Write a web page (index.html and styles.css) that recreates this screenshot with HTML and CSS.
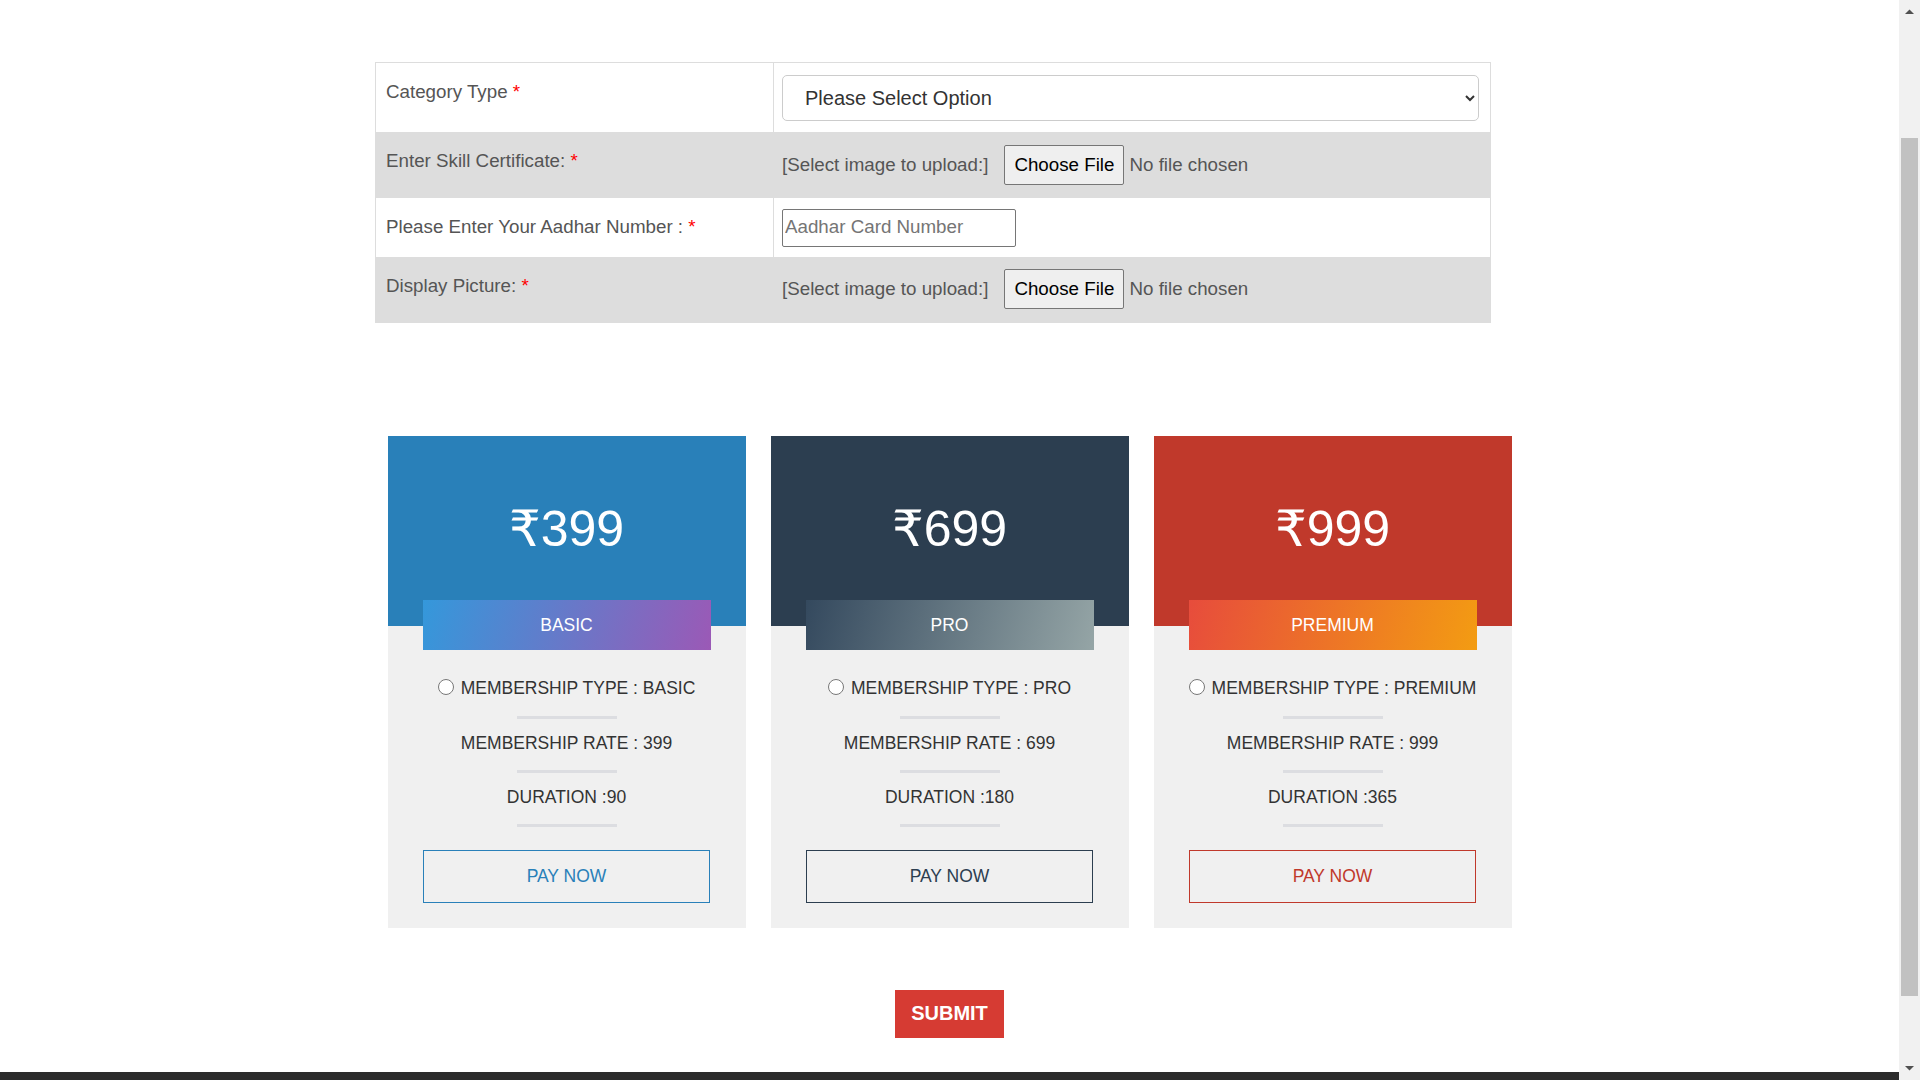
FILE: index.html
```html
<!DOCTYPE html>
<html lang="en">
<head>
<meta charset="utf-8">
<title>Membership</title>
<link rel="stylesheet" href="styles.css">
</head>
<body>
<main class="page">
<div class="form-wrap">
  <table class="form-table">
    <colgroup><col class="col-lbl"><col></colgroup>
    <tr class="r1 white">
      <td class="lbl">Category Type <span class="req">*</span></td>
      <td class="fld"><select class="sel"><option>Please Select Option</option></select></td>
    </tr>
    <tr class="r2 gray">
      <td class="lbl">Enter Skill Certificate: <span class="req">*</span></td>
      <td class="fld"><div class="fld-inner"><span class="hint">[Select image to upload:]</span><input type="file" class="file"></div></td>
    </tr>
    <tr class="r3 white">
      <td class="lbl">Please Enter Your Aadhar Number : <span class="req">*</span></td>
      <td class="fld"><input type="text" class="txt" placeholder="Aadhar Card Number"></td>
    </tr>
    <tr class="r4 gray">
      <td class="lbl">Display Picture: <span class="req">*</span></td>
      <td class="fld"><div class="fld-inner"><span class="hint">[Select image to upload:]</span><input type="file" class="file"></div></td>
    </tr>
  </table>
</div>

<div class="plans">
  <div class="card basic">
    <div class="card-head">₹399</div>
    <div class="ribbon">BASIC</div>
    <ul class="feat">
      <li><label class="radio-lbl"><input type="radio" name="plan" class="radio">MEMBERSHIP TYPE : BASIC</label></li>
      <li class="sep"></li>
      <li>MEMBERSHIP RATE : 399</li>
      <li class="sep"></li>
      <li>DURATION :90</li>
      <li class="sep"></li>
    </ul>
    <button class="pay">PAY NOW</button>
  </div>
  <div class="card pro">
    <div class="card-head">₹699</div>
    <div class="ribbon">PRO</div>
    <ul class="feat">
      <li><label class="radio-lbl"><input type="radio" name="plan" class="radio">MEMBERSHIP TYPE : PRO</label></li>
      <li class="sep"></li>
      <li>MEMBERSHIP RATE : 699</li>
      <li class="sep"></li>
      <li>DURATION :180</li>
      <li class="sep"></li>
    </ul>
    <button class="pay">PAY NOW</button>
  </div>
  <div class="card premium">
    <div class="card-head">₹999</div>
    <div class="ribbon">PREMIUM</div>
    <ul class="feat">
      <li><label class="radio-lbl"><input type="radio" name="plan" class="radio">MEMBERSHIP TYPE : PREMIUM</label></li>
      <li class="sep"></li>
      <li>MEMBERSHIP RATE : 999</li>
      <li class="sep"></li>
      <li>DURATION :365</li>
      <li class="sep"></li>
    </ul>
    <button class="pay">PAY NOW</button>
  </div>
</div>

<div class="submit-row"><button class="submit">SUBMIT</button></div>

<footer class="footer"></footer>
</main>

<div class="vscroll" aria-hidden="true">
  <div class="sb-btn"><svg width="21" height="21" viewBox="0 0 21 21"><polygon points="6,14 15,14 10.5,9.5" fill="#505050"/></svg></div>
  <div class="sb-track"><div class="sb-thumb"></div></div>
  <div class="sb-btn"><svg width="21" height="21" viewBox="0 0 21 21"><polygon points="6,7 15,7 10.5,11.5" fill="#505050"/></svg></div>
</div>
</body>
</html>
```

FILE: styles.css
```css
html, body { margin: 0; padding: 0; }
body {
  font-family: "Liberation Sans", Arial, "DejaVu Sans", sans-serif;
  background: #fff;
  color: #333;
  overflow: hidden;
  height: 1080px;
}
.page {
  margin-right: 21px;
  padding-top: 62px;
}

/* fake browser scrollbar */
.vscroll {
  position: fixed;
  top: 0;
  right: 0;
  width: 21px;
  height: 1080px;
  background: #f1f1f1;
  display: flex;
  flex-direction: column;
}
.sb-btn { height: 21px; flex: none; }
.sb-btn svg { display: block; }
.sb-track { flex: 1; }
.sb-thumb {
  margin: 117px 2px 0;
  height: 858px;
  background: #c1c1c1;
}

.form-wrap { width: 1149px; margin: 0 auto; }
.form-table {
  width: 1116px;
  border-collapse: collapse;
  table-layout: fixed;
  border: 1px solid #ddd;
}
.col-lbl { width: 398px; }
.form-table tr.white { background: #fff; }
.form-table tr.gray { background: #ddd; }
.form-table tr.r1 { height: 69px; }
.form-table tr.r2 { height: 66px; }
.form-table tr.r3 { height: 59px; }
.form-table tr.r4 { height: 66px; }

.lbl {
  padding: 16px 10px 0;
  vertical-align: top;
  font-size: 18.75px;
  line-height: 26px;
  color: #555;
}
.req { color: #f00; }
.fld {
  padding: 0 8px;
  vertical-align: middle;
  border-left: 1px solid #ddd;
  font-size: 18.75px;
  color: #555;
}
.fld-inner { display: flex; align-items: center; gap: 16px; }
.sel {
  display: block;
  width: 697px;
  height: 46px;
  box-sizing: border-box;
  border: 1px solid #ccc;
  border-radius: 5px;
  background-color: #fff;
  font-family: inherit;
  font-size: 20px;
  color: #333;
  padding: 0 16px 0 18px;
  margin-top: 2px;
}
.hint { color: #555; }
.file {
  font-family: inherit;
  font-size: 18.75px;
  color: #555;
}
.file::file-selector-button {
  height: 40px;
  padding: 0 9px;
  margin-right: 5px;
  border: 1px solid #767676;
  border-radius: 2px;
  background: #efefef;
  color: #000;
  font-family: inherit;
  font-size: 18.75px;
}
.txt {
  display: block;
  width: 234px;
  height: 38px;
  box-sizing: border-box;
  border: 1px solid #767676;
  border-radius: 2px;
  padding: 0 2px 1px;
  font-family: inherit;
  font-size: 18.75px;
  color: #333;
  margin-top: 1px;
}
.txt::placeholder { color: #757575; }

.plans {
  display: flex;
  justify-content: center;
  gap: 25px;
  margin-top: 113px;
}
.card {
  width: 358px;
  background: #f0f0f0;
  padding-bottom: 25px;
  text-align: center;
}
.card-head {
  height: 190px;
  box-sizing: border-box;
  padding-top: 63px;
  font-size: 50px;
  line-height: 60px;
  color: #fff;
}
.basic .card-head { background: #2980b9; }
.pro .card-head { background: #2c3e50; }
.premium .card-head { background: #c0392b; }

.ribbon {
  margin: -26px 35px 0;
  height: 50px;
  line-height: 50px;
  font-size: 17.5px;
  color: #fff;
}
.basic .ribbon { background: linear-gradient(105deg, #3498db 0%, #9b59b6 100%); }
.pro .ribbon { background: linear-gradient(105deg, #34495e 0%, #95a5a6 100%); }
.premium .ribbon { background: linear-gradient(105deg, #e74c3c 0%, #f39c12 100%); }

.feat {
  list-style: none;
  margin: 0;
  padding: 14px 0 0;
  font-size: 17.5px;
  line-height: 25px;
  color: #333;
}
.feat li { padding: 12px 0 14px; }
.feat li.sep {
  width: 100px;
  height: 3px;
  padding: 0;
  margin: 0 auto;
  background: #dcdde1;
}
.radio-lbl { display: inline-flex; align-items: center; }
.radio {
  width: 16px;
  height: 16px;
  margin: 0 7px 4px 0;
}

.pay {
  display: block;
  width: 287px;
  height: 53px;
  margin: 23px auto 0;
  background: transparent;
  font-family: inherit;
  font-size: 17.5px;
  cursor: pointer;
}
.basic .pay { border: 1px solid #2980b9; color: #2980b9; }
.pro .pay { border: 1px solid #2c3e50; color: #2c3e50; }
.premium .pay { border: 1px solid #c0392b; color: #c0392b; }

.submit-row {
  display: flex;
  justify-content: center;
  margin-top: 62px;
}
.submit {
  width: 109px;
  height: 48px;
  border: none;
  background: #d63b33;
  color: #fff;
  font-family: inherit;
  font-weight: bold;
  font-size: 20px;
  cursor: pointer;
}

.footer {
  margin-top: 34px;
  height: 89px;
  background: #2b2b2b;
}
```
